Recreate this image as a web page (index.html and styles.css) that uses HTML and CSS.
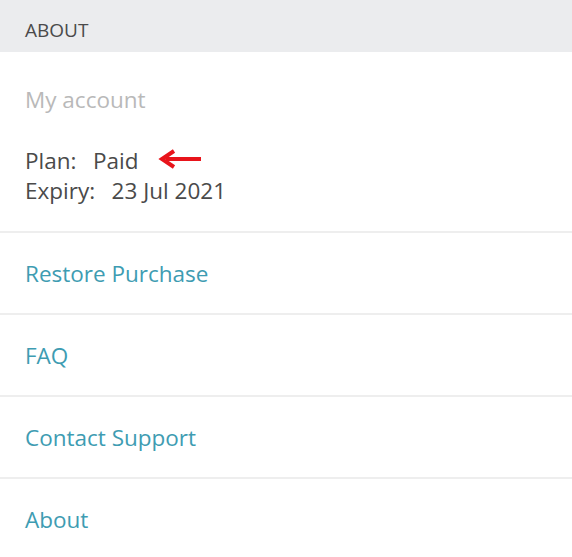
FILE: index.html
```html
<!DOCTYPE html>
<html>
<head>
<meta charset="utf-8">
<link rel="stylesheet" href="styles.css">
</head>
<body>
<div class="page">
  <div class="section-header">ABOUT</div>
  <div class="account">
    <div class="account-title">My account</div>
    <div class="account-lines">
      <div class="account-line">
        <span class="label">Plan:</span><span class="value">Paid</span>
        <svg class="arrow" width="44" height="20" viewBox="0 0 44 20">
          <path d="M43 10 H8" stroke="#e8141b" stroke-width="4" fill="none"/>
          <path d="M16 2 L4 10 L16 18" stroke="#e8141b" stroke-width="4" fill="none" stroke-linejoin="miter"/>
        </svg>
      </div>
      <div class="account-line">
        <span class="label">Expiry:</span><span class="value">23 Jul 2021</span>
      </div>
    </div>
  </div>
  <div class="row">Restore Purchase</div>
  <div class="row">FAQ</div>
  <div class="row">Contact Support</div>
  <div class="row">About</div>
</div>
</body>
</html>
```

FILE: styles.css
```css
html, body {
  margin: 0;
  padding: 0;
  background: #ffffff;
}
body {
  font-family: "Open Sans", "Noto Sans", sans-serif;
  width: 572px;
  height: 557px;
  overflow: hidden;
}
.page {
  display: flex;
  flex-direction: column;
}
.section-header {
  height: 52px;
  background: #ebecee;
  color: #4a4a4a;
  font-size: 19px;
  padding: 8px 25px 0;
  box-sizing: border-box;
  line-height: 44px;
}
.account {
  padding: 33px 25px 25px;
  border-bottom: 2px solid #eeeeee;
}
.account-title {
  color: #b9b9b9;
  font-size: 22.5px;
  line-height: 30px;
}
.account-lines {
  margin-top: 31px;
}
.account-line {
  display: flex;
  align-items: center;
  color: #4a4a4a;
  font-size: 22.5px;
  line-height: 30px;
}
.label {
  margin-right: 16.5px;
}
.arrow {
  margin-left: 20px;
  margin-top: -4px;
}
.row {
  height: 80px;
  display: flex;
  align-items: center;
  padding: 0 25px;
  color: #3e9cb2;
  font-size: 22.5px;
  border-bottom: 2px solid #eeeeee;
}
.row:last-child {
  border-bottom: none;
}
```
